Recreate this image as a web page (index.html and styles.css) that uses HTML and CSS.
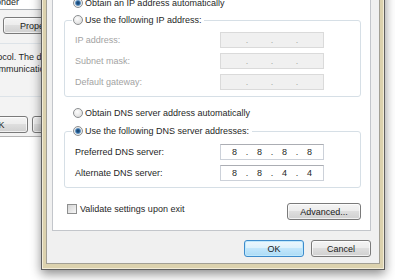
FILE: index.html
```html
<!DOCTYPE html>
<html lang="en">
<head>
    <meta charset="UTF-8">
    <meta name="viewport" content="width=device-width, initial-scale=1.0">
    <title>Internet Protocol Version 4 (TCP/IPv4) Properties</title>
    <link rel="stylesheet" href="styles.css">
</head>
<body>
    <div class="desktop">
        <!-- connection properties window behind the dialog -->
        <div class="back-window">
            <div class="list-box">
                <div class="list-item">Link-Layer Topology Discovery Responder</div>
            </div>
            <div class="back-buttons">
                <button class="btn back-btn">Install...</button>
                <button class="btn back-btn">Uninstall</button>
                <button class="btn back-btn">Properties</button>
            </div>
            <fieldset class="desc">
                <legend>Description</legend>
                <p>Transmission Control Protocol/Internet Protocol. The default<br>wide area network protocol that provides communication across<br>diverse interconnected networks.</p>
            </fieldset>
            <div class="back-footer">
                <button class="btn">OK</button>
                <button class="btn">Cancel</button>
            </div>
        </div>

        <!-- TCP/IPv4 properties dialog -->
        <div class="dialog">
            <div class="client">
                <div class="panel">
                    <label class="option"><span class="radio checked"></span>Obtain an IP address automatically</label>
                    <fieldset class="group">
                        <legend><span class="option"><span class="radio"></span>Use the following IP address:</span></legend>
                        <div class="fields">
                            <span class="field-label muted">IP address:</span>
                            <span class="ip disabled"><span class="seg"></span><span class="dot">.</span><span class="seg"></span><span class="dot">.</span><span class="seg"></span><span class="dot">.</span><span class="seg"></span></span>
                            <span class="field-label muted">Subnet mask:</span>
                            <span class="ip disabled"><span class="seg"></span><span class="dot">.</span><span class="seg"></span><span class="dot">.</span><span class="seg"></span><span class="dot">.</span><span class="seg"></span></span>
                            <span class="field-label muted">Default gateway:</span>
                            <span class="ip disabled"><span class="seg"></span><span class="dot">.</span><span class="seg"></span><span class="dot">.</span><span class="seg"></span><span class="dot">.</span><span class="seg"></span></span>
                        </div>
                    </fieldset>
                    <label class="option option-dns"><span class="radio"></span>Obtain DNS server address automatically</label>
                    <fieldset class="group group-dns">
                        <legend><span class="option"><span class="radio checked"></span>Use the following DNS server addresses:</span></legend>
                        <div class="fields">
                            <span class="field-label">Preferred DNS server:</span>
                            <span class="ip"><span class="seg">8</span><span class="dot">.</span><span class="seg">8</span><span class="dot">.</span><span class="seg">8</span><span class="dot">.</span><span class="seg">8</span></span>
                            <span class="field-label">Alternate DNS server:</span>
                            <span class="ip"><span class="seg">8</span><span class="dot">.</span><span class="seg">8</span><span class="dot">.</span><span class="seg">4</span><span class="dot">.</span><span class="seg">4</span></span>
                        </div>
                    </fieldset>
                    <div class="validate-row">
                        <label class="option check-option"><span class="checkbox"></span>Validate settings upon exit</label>
                        <button class="btn advanced">Advanced...</button>
                    </div>
                </div>
                <div class="dialog-buttons">
                    <button class="btn default">OK</button>
                    <button class="btn">Cancel</button>
                </div>
            </div>
        </div>
    </div>
</body>
</html>
```

FILE: styles.css
```css
body {
    margin: 0;
    font-family: "Liberation Sans", Arial, sans-serif;
    font-size: 9px;
    line-height: 12px;
    color: #1f1f1f;
    background-color: #fff;
}
.desktop {
    position: relative;
    width: 395px;
    height: 280px;
    overflow: hidden;
}

/* buttons */
.btn {
    font: inherit;
    color: #1a1a1a;
    padding: 0;
    height: 17px;
    box-sizing: border-box;
    border: 1px solid #7a7a7a;
    border-radius: 3px;
    background: linear-gradient(#f4f4f4 0%, #ececec 49%, #dedede 50%, #d0d0d0 100%);
    box-shadow: inset 0 0 0 1px rgba(255, 255, 255, 0.7);
    text-align: center;
}
.btn.default {
    border-color: #3d8ccc;
    background: linear-gradient(#ecf7fd 0%, #dcf1fc 49%, #c2e7fc 50%, #acdbf5 100%);
    box-shadow: inset 0 0 0 1px #bfe8fc;
}

/* window behind */
.back-window {
    position: absolute;
    left: -200px;
    top: -40px;
    width: 300px;
    box-sizing: border-box;
    padding: 0 0 3px 10px;
    background-color: #f3f3f3;
    border-bottom: 1px solid #b4b4b4;
}
.list-box {
    height: 50px;
    box-sizing: border-box;
    border: 1px solid #aeb2b7;
    background-color: #fff;
    display: flex;
    flex-direction: column;
    justify-content: flex-end;
    padding-bottom: 1px;
}
.list-item {
    padding-left: 39px;
    white-space: nowrap;
}
.back-buttons {
    display: flex;
    gap: 3px;
    margin-top: 7px;
    padding-left: 37px;
}
.back-btn {
    width: 75px;
}
.desc {
    margin: 3px 0 0;
    padding: 2px 0 9px;
    border: 1px solid #dde3e8;
    border-radius: 3px;
    min-width: 0;
}
.desc legend {
    padding: 0 2px;
    margin-left: 6px;
}
.desc p {
    margin: 0 0 0 14px;
    white-space: nowrap;
}
.back-footer {
    display: flex;
    gap: 4px;
    margin-top: 19px;
    padding-left: 158px;
}
.back-footer .btn {
    width: 60px;
}

/* dialog */
.dialog {
    position: absolute;
    left: 41px;
    top: -30px;
    width: 344px;
    box-sizing: border-box;
    border: 1px solid #5f5f5f;
    padding: 4px 4px 5px;
    background-color: #dcd2ae;
    box-shadow: inset 0 0 0 1px #f2ecd8, 0 4px 10px rgba(0, 0, 0, 0.45);
}
.client {
    background-color: #f0f0f0;
    border: 1px solid #a29f94;
    padding: 8px 8px 6px 5px;
}
.panel {
    background-color: #fff;
    border: 1px solid #c3c6cb;
    padding: 12px 9px 10px 11px;
}
.option {
    display: flex;
    align-items: center;
    gap: 2px;
    height: 12px;
    white-space: nowrap;
}
.panel > .option {
    margin-left: 9px;
}
.option-dns {
    margin-top: 10px;
}
.radio {
    flex: none;
    width: 10px;
    height: 10px;
    box-sizing: border-box;
    border-radius: 50%;
    border: 1px solid #8c8f91;
    background: radial-gradient(circle at 40% 35%, #fdfdfd 0, #e6e6e6 60%, #d2d2d2 100%);
}
.radio.checked {
    background: radial-gradient(circle, #123b63 0, #2a639a 1.8px, #86aed2 2.8px, #ececec 3.3px, #dcdcdc 100%);
}
.checkbox {
    flex: none;
    width: 10px;
    height: 10px;
    box-sizing: border-box;
    border: 1px solid #8e8f8f;
    background: linear-gradient(135deg, #d4d4d4, #f6f6f6);
}
.group {
    margin: 5px 0 0;
    padding: 6px 0;
    border: 1px solid #d6dfe6;
    border-radius: 3px;
    min-width: 0;
}
.group legend {
    padding: 0 3px 0 1px;
    margin-left: 7px;
}
.group-dns {
    margin-top: 6px;
    padding-top: 7px;
}
.fields {
    display: grid;
    grid-template-columns: 145px 104px;
    row-gap: 5px;
    align-items: center;
    margin-left: 10px;
}
.field-label {
    white-space: nowrap;
}
.muted {
    color: #a3a3a3;
}
.ip {
    display: flex;
    align-items: center;
    height: 16px;
    box-sizing: border-box;
    padding: 0 3px;
    border: 1px solid #ccd1d9;
    border-top-color: #abadb3;
    background-color: #fff;
    color: #1f1f1f;
}
.ip .seg {
    flex: 1;
    text-align: center;
}
.ip .dot {
    width: 4px;
    text-align: center;
}
.ip.disabled {
    background-color: #f0f0f0;
    border-color: #dadada;
    color: #a5a5a5;
}
.validate-row {
    display: flex;
    justify-content: space-between;
    align-items: flex-start;
    margin-top: 15px;
}
.check-option {
    margin-left: 3px;
    gap: 3px;
}
.advanced {
    width: 74px;
}
.dialog-buttons {
    display: flex;
    justify-content: flex-end;
    gap: 7px;
    margin-top: 9px;
}
.dialog-buttons .btn {
    width: 60px;
}
```
